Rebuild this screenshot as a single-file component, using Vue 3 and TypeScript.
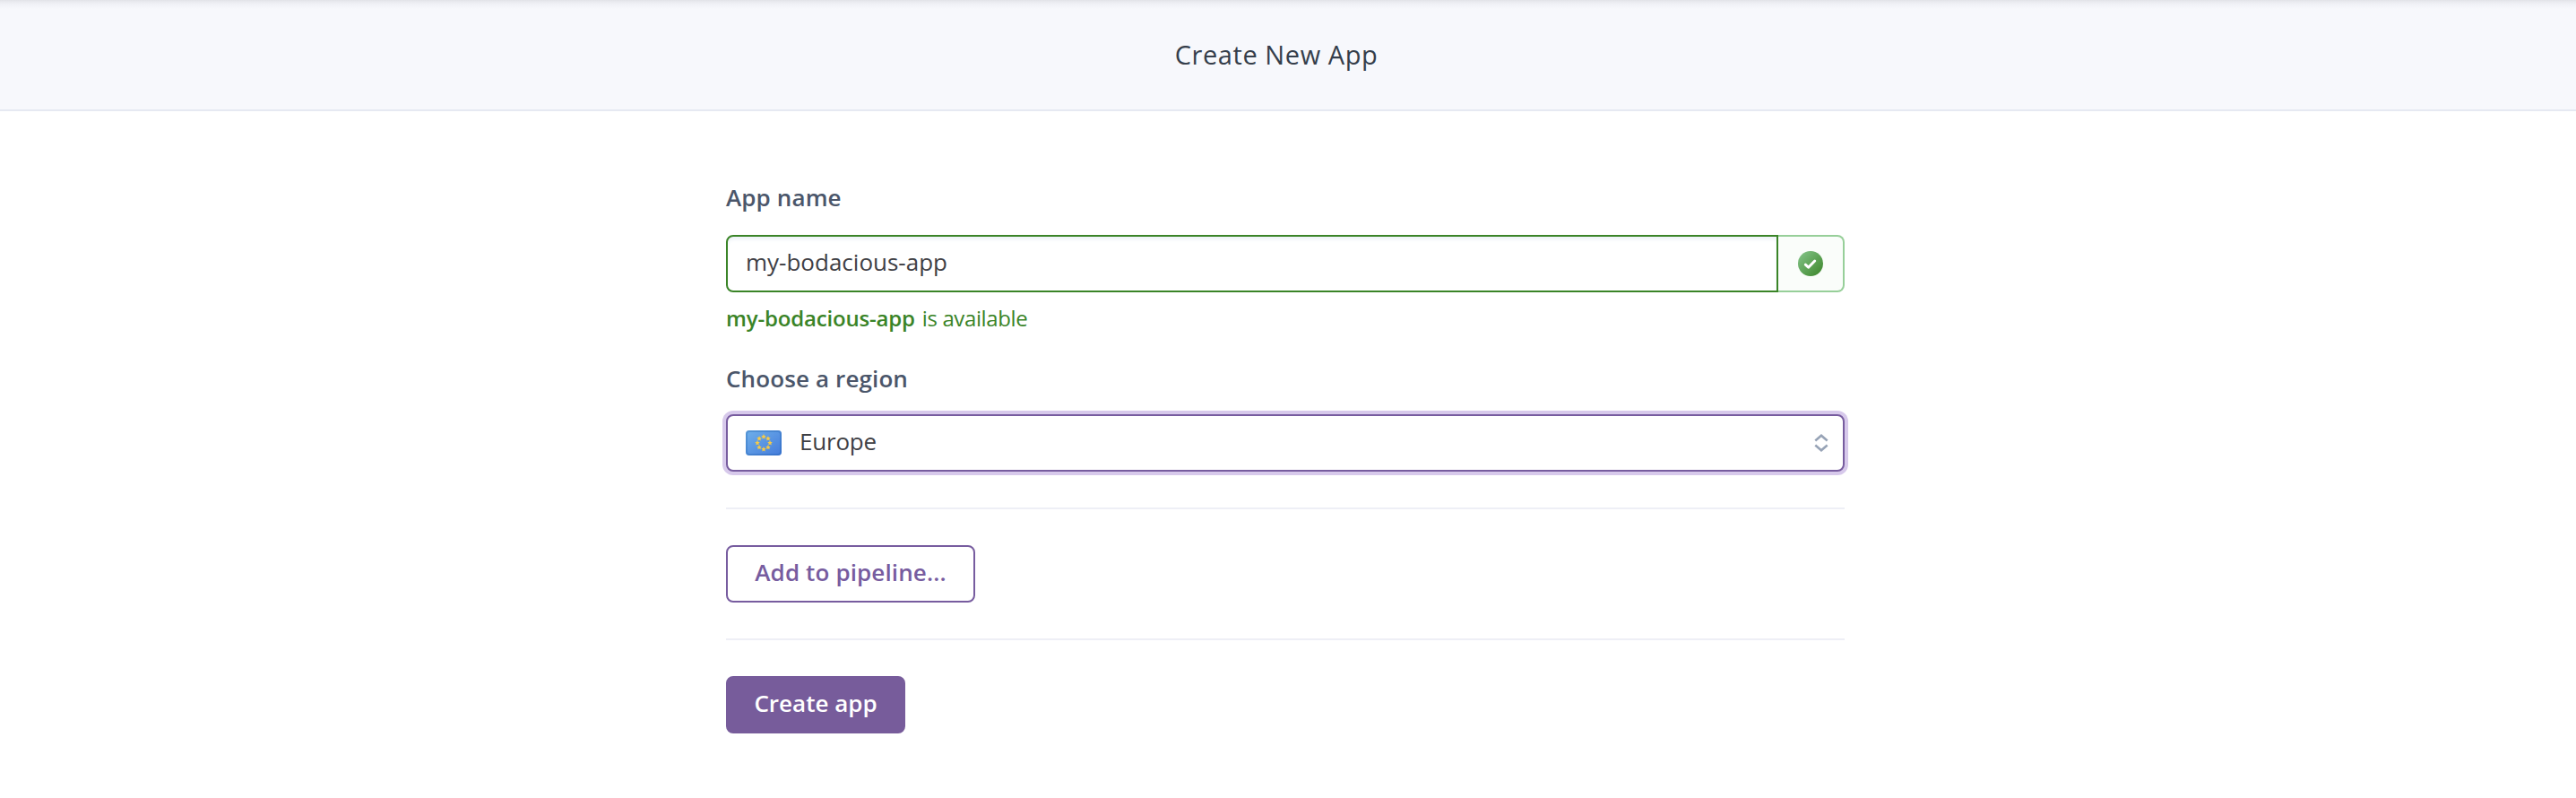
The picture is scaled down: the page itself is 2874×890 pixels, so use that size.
<script setup lang="ts">
import { ref } from 'vue'

const appName = ref('my-bodacious-app')
const region = ref('Europe')

const star = '0,-2.9 0.9,-1 2.8,-0.9 1.3,0.5 1.8,2.4 0,1.4 -1.8,2.4 -1.3,0.5 -2.8,-0.9 -0.9,-1'
const stars = Array.from({ length: 8 }, (_, i) => {
  const a = (i * Math.PI) / 4
  return { x: 20 + 7 * Math.sin(a), y: 14 - 7 * Math.cos(a) }
})
</script>

<template>
  <div class="page">
    <header class="header">
      <h1 class="title">Create New App</h1>
    </header>
    <main class="form">
      <label class="label" for="name">App name</label>
      <div class="group">
        <input id="name" v-model="appName" class="input" type="text" spellcheck="false" />
        <span class="addon">
          <svg width="28" height="28" viewBox="0 0 28 28">
            <defs>
              <linearGradient id="ok" x1="0" y1="0" x2="1" y2="1">
                <stop offset="0" stop-color="#86c68c" />
                <stop offset="1" stop-color="#3a8427" />
              </linearGradient>
            </defs>
            <circle cx="14" cy="14" r="14" fill="url(#ok)" />
            <path d="M8.3 15.2 L11.6 18.2 L18.7 11" fill="none" stroke="#fff" stroke-width="3" stroke-linecap="round" stroke-linejoin="round" />
          </svg>
        </span>
      </div>
      <p class="hint"><strong class="hint-name">{{ appName }}</strong><span class="hint-rest">is available</span></p>

      <div class="label label-region">Choose a region</div>
      <div class="select" tabindex="0">
        <svg class="flag" width="40" height="28" viewBox="0 0 40 28">
          <defs>
            <linearGradient id="eu" x1="0" y1="0" x2="1" y2="1">
              <stop offset="0" stop-color="#6fb0ea" />
              <stop offset="1" stop-color="#447bdb" />
            </linearGradient>
          </defs>
          <rect width="40" height="28" rx="4" fill="url(#eu)" />
          <rect x="1" y="1" width="38" height="26" rx="3" fill="none" stroke="#1f5fae" stroke-opacity=".32" stroke-width="2" />
          <polygon v-for="(s, i) in stars" :key="i" :points="star" :transform="`translate(${s.x} ${s.y})`" fill="#f8cb45" />
        </svg>
        <span class="region">{{ region }}</span>
        <svg class="caret" width="16" height="20" viewBox="0 0 16 20" fill="none" stroke="#97a3b6" stroke-width="2.6">
          <path d="M1.3 7.4 L8 1.8 L14.7 7.4 M1.3 12.6 L8 18.2 L14.7 12.6" />
        </svg>
      </div>

      <hr class="rule" />
      <button class="btn outline" type="button">Add to pipeline...</button>
      <hr class="rule" />
      <button class="btn solid" type="button">Create app</button>
    </main>
  </div>
</template>

<style>
body {
  margin: 0;
  background: #fff;
}
</style>

<style scoped>
.page {
  height: 890px;
  font-family: "Open Sans", "Noto Sans", sans-serif;
  font-size: 26px;
  color: #3f4045;
  background: #fff;
  overflow: hidden;
}
.page *,
.page {
  box-sizing: border-box;
}
.header {
  height: 124px;
  display: flex;
  justify-content: center;
  align-items: center;
  background: linear-gradient(#e2e3e8 0, #eff0f5 4px, #f7f8fc 10px);
  border-bottom: 2px solid #e6e9f2;
}
.title {
  margin: 0;
  padding-right: 26px;
  font-size: 29px;
  font-weight: 400;
  line-height: 40px;
  letter-spacing: 0.58px;
  color: #353e4b;
}
.form {
  width: 1248px;
  margin: 80px 0 0 810px;
}
.label {
  display: block;
  line-height: 32px;
  font-weight: 600;
  letter-spacing: 0.12px;
  color: #4b566a;
  white-space: nowrap;
}
.group {
  display: flex;
  height: 64px;
  margin-top: 26px;
}
.input {
  flex: 1;
  min-width: 0;
  height: 64px;
  padding: 0 20px 4px;
  border: 2px solid #3a8427;
  border-radius: 8px 0 0 8px;
  box-shadow: inset 0 4px 4px -1px #edf2f7;
  background: #fff;
  font: inherit;
  color: inherit;
  outline: none;
}
.addon {
  width: 74px;
  display: flex;
  align-items: center;
  justify-content: center;
  border: 2px solid #97cf99;
  border-left: 0;
  border-radius: 0 8px 8px 0;
  background: #fafdfa;
}
.hint {
  display: flex;
  gap: 8px;
  margin: 13px 0 0;
  font-size: 24px;
  line-height: 32px;
  color: #3a8427;
  white-space: nowrap;
}
.hint-name {
  font-weight: 600;
  letter-spacing: -0.18px;
}
.hint-rest {
  letter-spacing: -0.37px;
}
.label-region {
  margin-top: 35px;
}
.select {
  display: flex;
  align-items: center;
  height: 64px;
  margin-top: 24px;
  padding: 0 16px 0 20px;
  border: 2px solid #775c9f;
  border-radius: 8px;
  box-shadow: 0 0 0 4px #d7c9eb;
  background: #fff;
  outline: none;
}
.region {
  flex: 1;
  padding: 0 0 4px 20px;
  letter-spacing: -0.2px;
}
.rule {
  height: 2px;
  margin: 40px 0;
  border: 0;
  background: #eeeff6;
}
.btn {
  display: block;
  height: 64px;
  padding: 0 0 4px;
  border: 2px solid #775c9f;
  border-radius: 8px;
  font: inherit;
  font-weight: 600;
  white-space: nowrap;
}
.outline {
  width: 278px;
  background: #fff;
  color: #775c9f;
  letter-spacing: 0.12px;
}
.solid {
  width: 200px;
  background: #775c9b;
  border-color: #775c9b;
  color: #fff;
}
</style>
